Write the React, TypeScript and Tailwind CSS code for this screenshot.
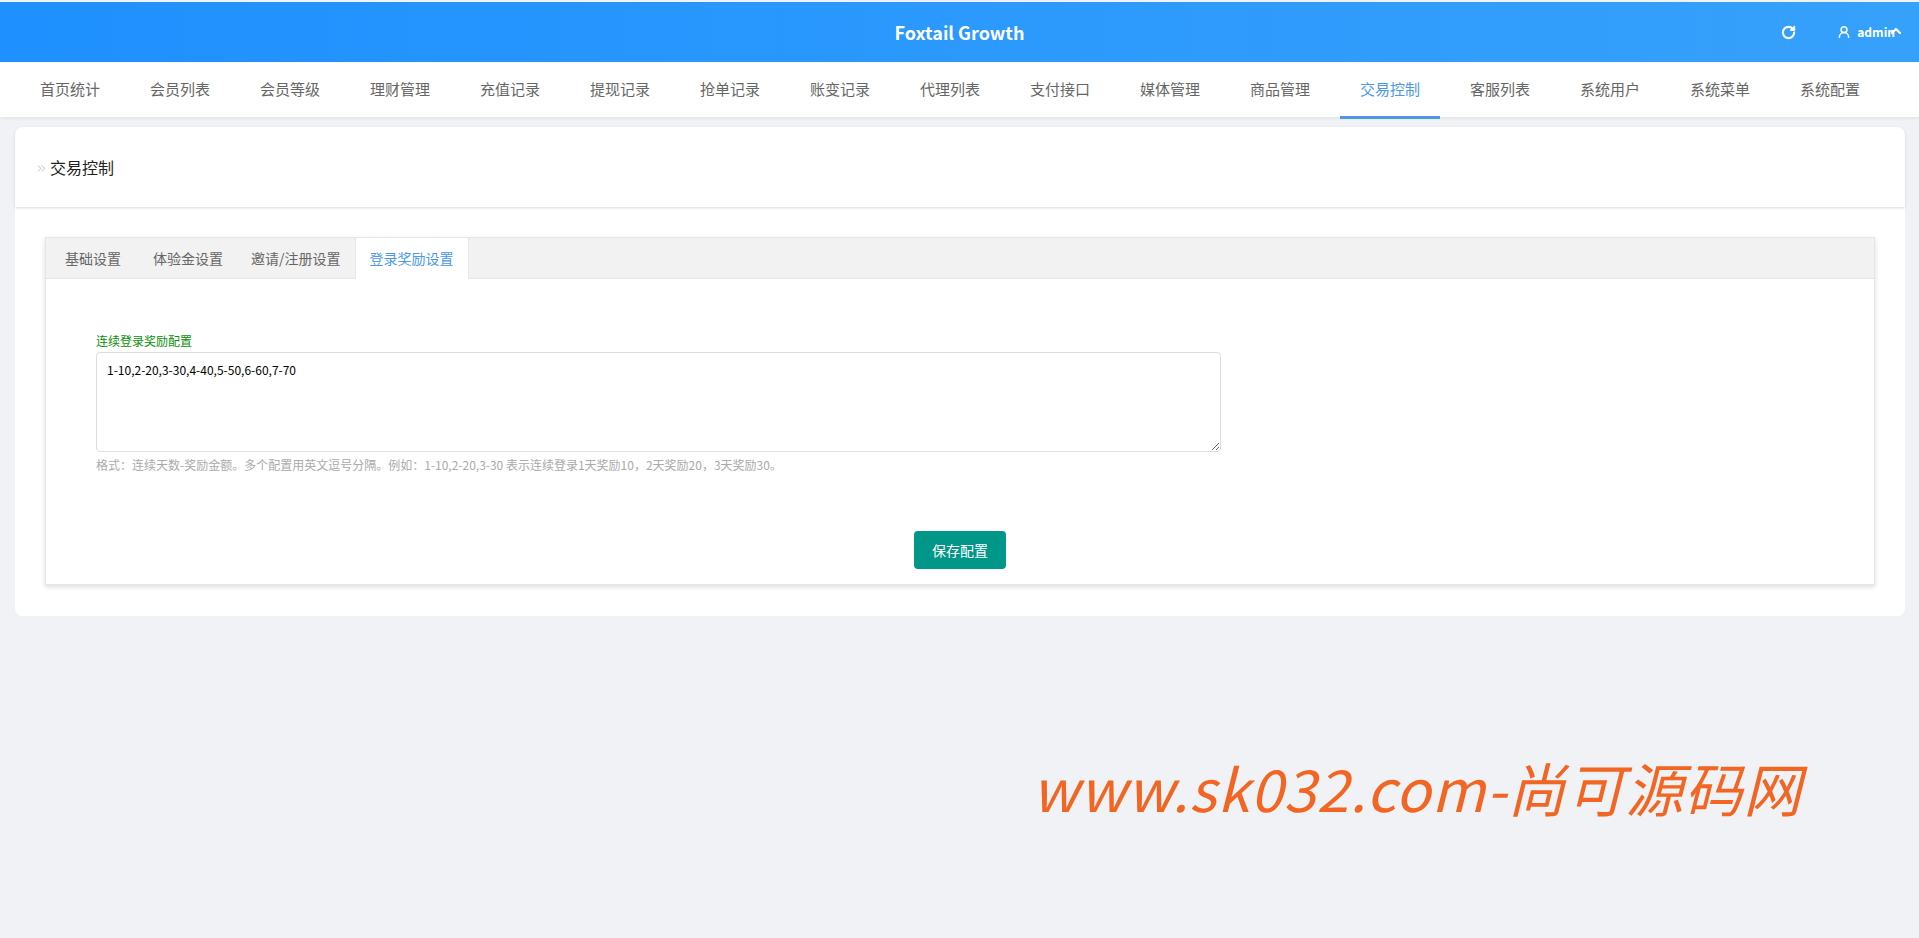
import { RotateCw, UserRound, ChevronUp, ChevronsRight } from 'lucide-react'

const NAV = [
  '首页统计',
  '会员列表',
  '会员等级',
  '理财管理',
  '充值记录',
  '提现记录',
  '抢单记录',
  '账变记录',
  '代理列表',
  '支付接口',
  '媒体管理',
  '商品管理',
  '交易控制',
  '客服列表',
  '系统用户',
  '系统菜单',
  '系统配置',
]

export default function App() {
  return (
    <div className="relative h-screen overflow-hidden bg-[#f0f2f5] pt-[2px] font-['Noto_Sans_CJK_SC',sans-serif]">
      {/* Top bar */}
      <header className="relative flex h-[60px] items-center justify-center bg-gradient-to-r from-[#1e90ff] to-[#36a1fb] text-white">
        <span className="text-[18px] font-bold">Foxtail Growth</span>
        <div className="absolute right-[15px] top-0 flex h-full items-center">
          <RotateCw size={15} strokeWidth={3.4} className="mr-[41px]" />
          <UserRound size={14} strokeWidth={2.6} className="mr-[6px]" />
          <span className="text-[12px] font-bold">admin</span>
          <ChevronUp size={16} strokeWidth={3.4} className="-ml-[7px] -mt-[2px]" />
        </div>
      </header>

      {/* Menu */}
      <nav className="flex h-[55px] gap-[10px] bg-white pl-[20px] shadow-[0_1px_4px_rgba(0,0,0,0.08)]">
        {NAV.map((item) => (
          <a
            key={item}
            className={
              item === '交易控制'
                ? 'relative flex h-[57px] w-[100px] items-center justify-center border-b-[3px] border-[#4a98e8] text-[15px] text-[#4a98e8]'
                : 'flex h-[57px] w-[100px] items-center justify-center border-b-[3px] border-transparent text-[15px] text-[#666]'
            }
          >
            {item}
          </a>
        ))}
      </nav>

      <main className="mt-[10px] pl-[15px] pr-[14px]">
        <div className="rounded-[8px] bg-white">
          <div className="flex h-[80px] items-center rounded-t-[8px] pl-[20px] shadow-[0_1px_3px_rgba(0,0,0,0.14)]">
            <ChevronsRight size={13} strokeWidth={1} className="mr-[2px] mt-[2px] text-[#888]" />
            <h2 className="text-[16px] font-normal text-[#222]">交易控制</h2>
          </div>

          <div className="px-[30px] pb-[31px] pt-[30px]">
            <div className="h-[348px] border border-[#e6e6e6] shadow-[0_2px_5px_rgba(0,0,0,0.14)]">
              <div className="flex h-[41px] border-b border-[#e6e6e6] bg-[#f2f2f2] text-[14px] text-[#666]">
                <span className="flex h-full items-center pl-[19px] pr-[17px]">基础设置</span>
                <span className="flex h-full items-center pl-[15px] pr-[13px]">体验金设置</span>
                <span className="flex h-full items-center pl-[15px] pr-[14px]">邀请/注册设置</span>
                <span className="flex h-[41px] items-center border-x border-[#e6e6e6] bg-white px-[14px] text-[#4a98e8]">
                  登录奖励设置
                </span>
              </div>

              <div className="flex flex-col pl-[50px]">
                <label className="mt-[53px] text-[12px] leading-[18px] text-[#0a8f0a]">连续登录奖励配置</label>
                <textarea
                  readOnly
                  value="1-10,2-20,3-30,4-40,5-50,6-60,7-70"
                  className="mt-[2px] block h-[100px] w-[1125px] rounded-[4px] border border-[#ddd] px-[10px] py-[8px] text-[12px] leading-[18px] text-black outline-none"
                />
                <p className="mt-[4px] text-[12px] leading-[18px] text-[#aaa]">
                  格式：连续天数-奖励金额。多个配置用英文逗号分隔。例如：1-10,2-20,3-30 表示连续登录1天奖励10，2天奖励20，3天奖励30。
                </p>
              </div>

              <div className="mt-[57px] flex justify-center">
                <button className="h-[38px] w-[92px] rounded-[4px] bg-[#009688] text-[14px] text-white">保存配置</button>
              </div>
            </div>
          </div>
        </div>
      </main>

      {/* Watermark */}
      <div className="absolute left-[1032px] top-[752px] whitespace-nowrap text-[58px] italic leading-[70px] tracking-[1px] text-[#f26522]">
        www.sk032.com-尚可源码网
      </div>
    </div>
  )
}
